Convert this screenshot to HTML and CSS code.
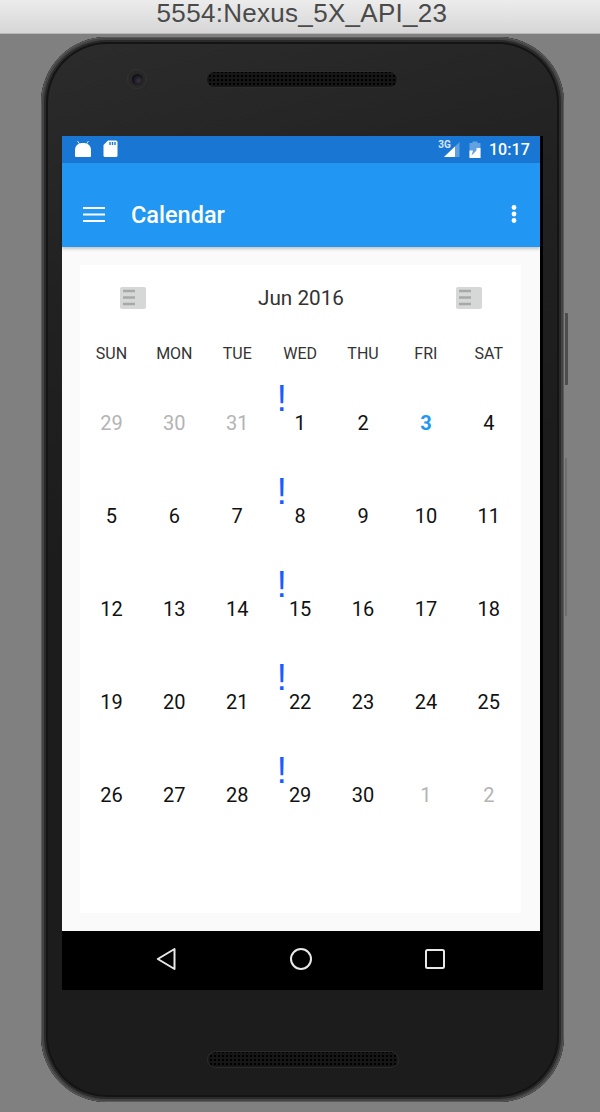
FILE: index.html
```html
<!DOCTYPE html>
<html lang="en">
<head>
<meta charset="utf-8">
<title>5554:Nexus_5X_API_23</title>
<link rel="stylesheet" href="styles.css">
</head>
<body>
<header class="titlebar">5554:Nexus_5X_API_23</header>
<main class="stage">
  <div class="phone">
    <span class="side-btn power"></span>
    <span class="side-btn volume"></span>
    <div class="bezel-top">
      <span class="camera"><span class="lens"></span></span>
      <span class="speaker"></span>
    </div>
    <div class="screen">
      <div class="app">
        <div class="statusbar">
          <svg class="st-android" width="18" height="17" viewBox="0 0 18 17"><path d="M3.5 1 L5.5 4 M14.5 1 L12.5 4" stroke="#fff" stroke-width="1" fill="none" opacity=".8"/><path d="M1 16 V10 C1 5.5 4.5 3 9 3 C13.5 3 17 5.5 17 10 V16 Q17 17 16 17 H2 Q1 17 1 16 Z" fill="#fff"/></svg>
          <svg class="st-sd" width="15" height="17" viewBox="0 0 15 17"><path d="M5 0.5 H13 Q14.5 0.5 14.5 2 V15.5 Q14.5 17 13 17 H2 Q0.5 17 0.5 15.5 V5 Z" fill="#fff"/><path d="M7 2 V5 M9.5 2 V5 M12 2 V5" stroke="#1976d2" stroke-width="1.4"/></svg>
          <span class="st-spacer"></span>
          <span class="st-3g">3G</span>
          <svg class="st-signal" width="17" height="17" viewBox="0 0 17 17"><path d="M16.5 1 V16 H1 Z" fill="#fff" opacity=".3"/><path d="M12 5.500 V16 H1 Z" fill="#fff"/></svg>
          <svg class="st-batt" width="12" height="17" viewBox="0 0 12 17"><path d="M3.500 0.500 H8.500 V2 H11.500 V17 H0.500 V2 H3.500 Z" fill="#fff" opacity=".32"/><path d="M0.500 9.500 H4 L2.500 14.500 L7.500 9.500 V7 H11.500 V17 H0.500 Z" fill="#fff"/></svg>
          <span class="st-time">10:17</span>
        </div>
        <div class="appbar">
          <svg class="menu-icon" width="24" height="16" viewBox="0 0 24 16"><path d="M1 2 H23 M1 8.500 H23 M1 15 H23" stroke="#fff" stroke-width="2" fill="none"/></svg>
          <h1 class="app-title">Calendar</h1>
          <svg class="more-icon" width="6" height="18" viewBox="0 0 6 18"><circle cx="3" cy="2.500" r="2.400" fill="#fff"/><circle cx="3" cy="9" r="2.400" fill="#fff"/><circle cx="3" cy="15.500" r="2.400" fill="#fff"/></svg>
        </div>
        <div class="content">
          <section class="card">
            <div class="month-row">
              <svg class="nav-arrow" width="26" height="22" viewBox="0 0 26 22"><rect width="26" height="22" rx="2" fill="#d6d8d8"/><path d="M3 4 H15 M3 10.500 H15 M3 17 H15" stroke="#a8a8a8" stroke-width="2.400"/></svg>
              <span class="month">Jun 2016</span>
              <svg class="nav-arrow" width="26" height="22" viewBox="0 0 26 22"><rect width="26" height="22" rx="2" fill="#d6d8d8"/><path d="M3 4 H15 M3 10.500 H15 M3 17 H15" stroke="#a8a8a8" stroke-width="2.400"/></svg>
            </div>
            <div class="weekdays">
              <span>SUN</span><span>MON</span><span>TUE</span><span>WED</span><span>THU</span><span>FRI</span><span>SAT</span>
            </div>
            <div class="dates">
              <span class="date other">29</span><span class="date other">30</span><span class="date other">31</span><span class="date marked">1</span><span class="date">2</span><span class="date today">3</span><span class="date">4</span>
              <span class="date">5</span><span class="date">6</span><span class="date">7</span><span class="date marked">8</span><span class="date">9</span><span class="date">10</span><span class="date">11</span>
              <span class="date">12</span><span class="date">13</span><span class="date">14</span><span class="date marked">15</span><span class="date">16</span><span class="date">17</span><span class="date">18</span>
              <span class="date">19</span><span class="date">20</span><span class="date">21</span><span class="date marked">22</span><span class="date">23</span><span class="date">24</span><span class="date">25</span>
              <span class="date">26</span><span class="date">27</span><span class="date">28</span><span class="date marked">29</span><span class="date">30</span><span class="date other">1</span><span class="date other">2</span>
            </div>
          </section>
        </div>
      </div>
      <nav class="navbar">
        <svg width="20" height="24" viewBox="0 0 20 24"><path d="M18.500 2 V22 L1.800 12 Z" fill="none" stroke="#e8e8e8" stroke-width="2" stroke-linejoin="round"/></svg>
        <svg width="24" height="24" viewBox="0 0 24 24"><circle cx="12" cy="12" r="10" fill="none" stroke="#e8e8e8" stroke-width="2"/></svg>
        <svg width="20" height="20" viewBox="0 0 20 20"><rect x="1" y="1" width="18" height="18" rx="1.500" fill="none" stroke="#e8e8e8" stroke-width="2"/></svg>
      </nav>
    </div>
    <div class="bezel-bottom">
      <span class="speaker"></span>
    </div>
  </div>
</main>
</body>
</html>
```
FILE: styles.css
```css
* { box-sizing: border-box; }
html, body { margin: 0; padding: 0; }
body {
  width: 600px;
  height: 1112px;
  overflow: hidden;
  font-family: Roboto, "Liberation Sans", sans-serif;
  background: #808080;
}
.titlebar {
  height: 34px;
  padding-left: 4px;
  text-align: center;
  font: 26px/26px "Liberation Sans", sans-serif;
  letter-spacing: 0.3px;
  color: #4a4a4a;
  background: linear-gradient(#ececec, #d6d6d6);
  border-bottom: 1px solid #b8b8b8;
}
.stage {
  height: 1078px;
  padding: 3px 0 0 41px;
  background: #808080;
}
.phone {
  position: relative;
  width: 523px;
  height: 1065px;
  padding-left: 21px;
  display: flex;
  flex-direction: column;
  border-radius: 66px;
  background: linear-gradient(165deg, #2c2c2c, #212121 22%, #1c1c1c 45%);
  box-shadow:
    inset 0 0 0 1px #5a5a5a,
    inset 0 0 0 3px #444,
    inset 0 0 0 5px #2a2a2a,
    inset 0 0 0 7px #141414;
}
.side-btn {
  position: absolute;
  width: 3px;
  left: 524px;
  border-radius: 0 1px 1px 0;
}
.power { top: 276px; height: 72px; background: #4d4d4d; }
.volume { top: 421px; height: 158px; background: #6e6e6e; width: 2px; }
.bezel-top {
  height: 99px;
  display: flex;
  align-items: flex-start;
  padding: 32px 0 0 65px;
}
.camera {
  width: 20px;
  height: 20px;
  display: flex;
  align-items: center;
  justify-content: center;
  border-radius: 50%;
  background: #282828;
  border: 1px solid #333;
}
.lens {
  width: 11px;
  height: 11px;
  border-radius: 50%;
  background: radial-gradient(circle at 60% 60%, #3a3340, #0e0e12 70%);
}
.speaker {
  display: block;
  width: 192px;
  height: 17px;
  margin: 2px 0 0 59px;
  border-radius: 9px;
  border: 1px solid #2c2c2c;
  background-color: #161616;
  background-image: radial-gradient(circle, #000 0.9px, transparent 1.1px);
  background-size: 4px 4px;
  background-position: 1px 2px;
}
.screen {
  width: 481px;
  height: 854px;
  display: flex;
  flex-direction: column;
  background: #000;
}
.app {
  width: 478px;
  height: 795px;
  display: flex;
  flex-direction: column;
}
.statusbar {
  height: 27px;
  flex: none;
  display: flex;
  align-items: center;
  padding: 0 10px 0 12px;
  background: #1976d2;
}
.st-android { margin-right: 11px; margin-top: -2px; }
.st-sd { margin-top: -2px; }
.st-spacer { flex: 1; }
.st-3g {
  font-size: 10px;
  font-weight: 700;
  line-height: 10px;
  color: #d8e6f6;
  margin: -10px -8px 0 0;
}
.st-signal { margin-top: -1px; }
.st-batt { margin: -1px 8px 0 9px; }
.st-time { font-size: 16px; font-weight: 500; color: #fff; letter-spacing: .1px; }
.appbar {
  height: 84px;
  flex: none;
  display: flex;
  align-items: center;
  padding: 20px 23px 0 20px;
  background: #2196f3;
  box-shadow: 0 2px 3px rgba(0, 0, 0, .22);
  position: relative;
}
.menu-icon { margin-top: -2px; }
.app-title {
  flex: 1;
  margin: 0 0 0 25px;
  font-size: 23.500px;
  font-weight: 500;
  color: #fff;
}
.more-icon { margin-top: -2px; }
.content {
  flex: 1;
  padding: 18px 19px 18px 18px;
  background: #fafafa;
}
.card {
  height: 648px;
  background: #fff;
}
.month-row {
  height: 66px;
  display: flex;
  align-items: center;
  justify-content: space-between;
  padding: 0 39px 0 40px;
}
.month { font-size: 20.700px; color: #333; }
.weekdays {
  height: 45px;
  display: grid;
  grid-template-columns: repeat(7, 62.900px);
  align-items: center;
  text-align: center;
  font-size: 16px;
  color: #333;
}
.dates {
  display: grid;
  grid-template-columns: repeat(7, 62.900px);
  grid-auto-rows: 93px;
  align-items: center;
  text-align: center;
  font-size: 20px;
  color: #111;
}
.date { position: relative; display: block; }
.other { color: #b4b4b4; }
.today { color: #2196f3; font-weight: 700; }
.marked::before {
  content: "!";
  position: absolute;
  left: 3px;
  top: -30px;
  width: 20px;
  font: 36px/36px "Liberation Sans", sans-serif;
  color: #1a5cff;
}
.navbar {
  flex: 1;
  display: flex;
  align-items: center;
  padding: 0 0 4px 94px;
  gap: 112.500px;
}
.bezel-bottom {
  flex: 1;
  padding: 61px 0 0 145px;
}
.bezel-bottom .speaker { margin: 0; }
```
